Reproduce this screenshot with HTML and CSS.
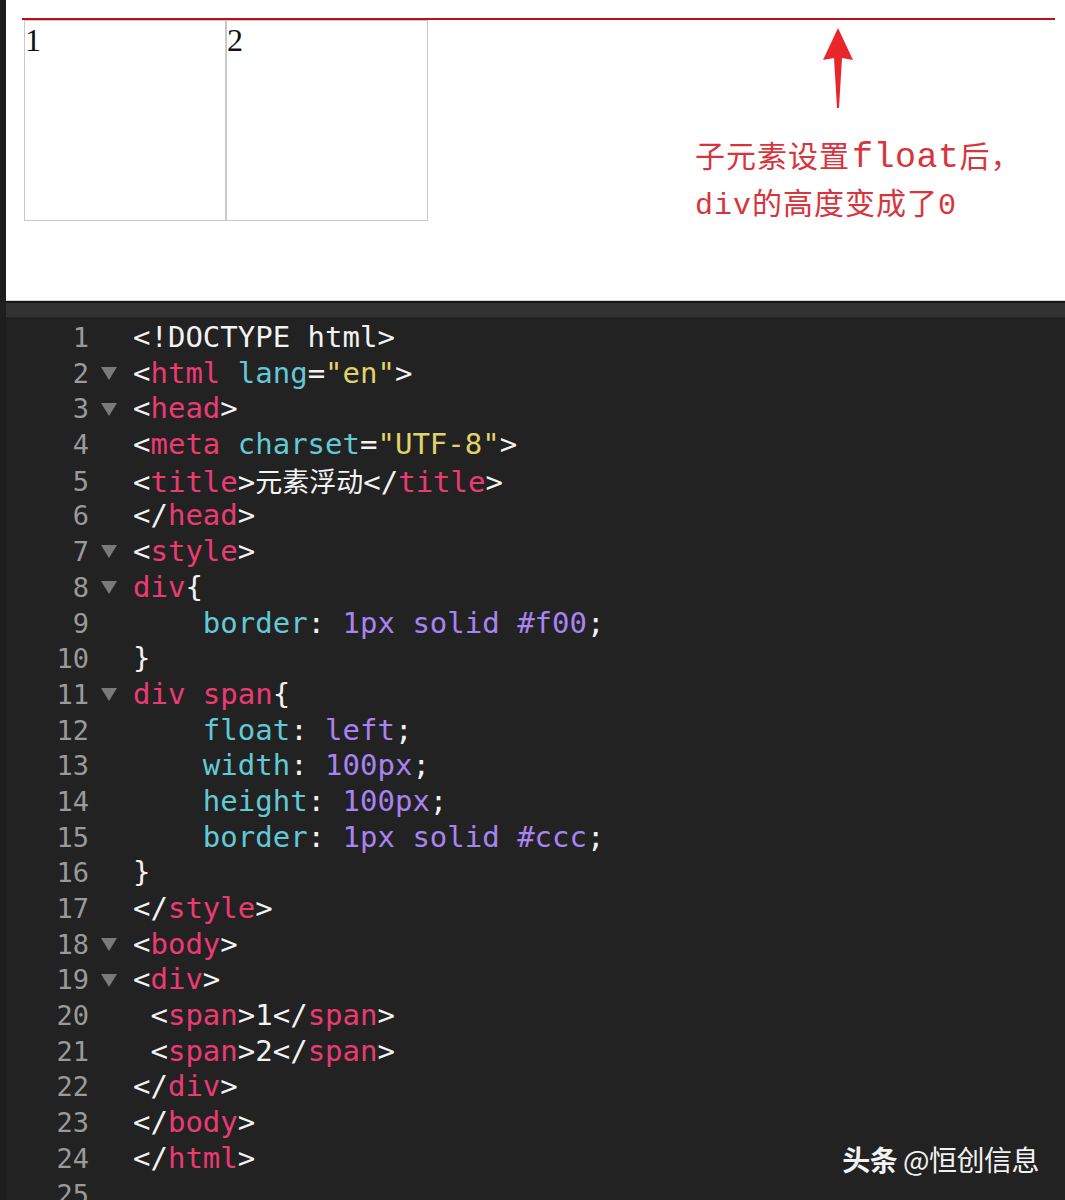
FILE: index.html
```html
<!DOCTYPE html>
<html lang="zh-CN">
<head>
<meta charset="UTF-8">
<title>元素浮动</title>
<link rel="stylesheet" href="styles.css">
</head>
<body>
<div class="preview">
  <div class="demo">
    <span class="box">1</span>
    <span class="box">2</span>
  </div>
  <svg class="arrow" width="40" height="82" viewBox="0 0 40 82">
    <path d="M20 0 L35 32 L24 30 L21 80 L19 80 L16 30 L5 32 Z" fill="#e8262c"/>
  </svg>
  <div class="note">
    <div class="note-line">子元素设置<span class="wide">float</span>后，</div>
    <div class="note-line">div的高度变成了0</div>
  </div>
</div>
<div class="divider"></div>
<div class="editor">
  <div class="row"><span class="ln">1</span><span class="fold"></span><span class="code"><span class="p">&lt;!DOCTYPE html&gt;</span></span></div>
  <div class="row"><span class="ln">2</span><span class="fold on"></span><span class="code"><span class="p">&lt;</span><span class="t">html</span> <span class="a">lang</span><span class="p">=</span><span class="s">"en"</span><span class="p">&gt;</span></span></div>
  <div class="row"><span class="ln">3</span><span class="fold on"></span><span class="code"><span class="p">&lt;</span><span class="t">head</span><span class="p">&gt;</span></span></div>
  <div class="row"><span class="ln">4</span><span class="fold"></span><span class="code"><span class="p">&lt;</span><span class="t">meta</span> <span class="a">charset</span><span class="p">=</span><span class="s">"UTF-8"</span><span class="p">&gt;</span></span></div>
  <div class="row"><span class="ln">5</span><span class="fold"></span><span class="code"><span class="p">&lt;</span><span class="t">title</span><span class="p">&gt;</span><span class="cjk">元素浮动</span><span class="p">&lt;/</span><span class="t">title</span><span class="p">&gt;</span></span></div>
  <div class="row"><span class="ln">6</span><span class="fold"></span><span class="code"><span class="p">&lt;/</span><span class="t">head</span><span class="p">&gt;</span></span></div>
  <div class="row"><span class="ln">7</span><span class="fold on"></span><span class="code"><span class="p">&lt;</span><span class="t">style</span><span class="p">&gt;</span></span></div>
  <div class="row"><span class="ln">8</span><span class="fold on"></span><span class="code"><span class="t">div</span><span class="p">{</span></span></div>
  <div class="row"><span class="ln">9</span><span class="fold"></span><span class="code">    <span class="a">border</span><span class="p">:</span> <span class="v">1px solid #f00</span><span class="p">;</span></span></div>
  <div class="row"><span class="ln">10</span><span class="fold"></span><span class="code"><span class="p">}</span></span></div>
  <div class="row"><span class="ln">11</span><span class="fold on"></span><span class="code"><span class="t">div span</span><span class="p">{</span></span></div>
  <div class="row"><span class="ln">12</span><span class="fold"></span><span class="code">    <span class="a">float</span><span class="p">:</span> <span class="v">left</span><span class="p">;</span></span></div>
  <div class="row"><span class="ln">13</span><span class="fold"></span><span class="code">    <span class="a">width</span><span class="p">:</span> <span class="v">100px</span><span class="p">;</span></span></div>
  <div class="row"><span class="ln">14</span><span class="fold"></span><span class="code">    <span class="a">height</span><span class="p">:</span> <span class="v">100px</span><span class="p">;</span></span></div>
  <div class="row"><span class="ln">15</span><span class="fold"></span><span class="code">    <span class="a">border</span><span class="p">:</span> <span class="v">1px solid #ccc</span><span class="p">;</span></span></div>
  <div class="row"><span class="ln">16</span><span class="fold"></span><span class="code"><span class="p">}</span></span></div>
  <div class="row"><span class="ln">17</span><span class="fold"></span><span class="code"><span class="p">&lt;/</span><span class="t">style</span><span class="p">&gt;</span></span></div>
  <div class="row"><span class="ln">18</span><span class="fold on"></span><span class="code"><span class="p">&lt;</span><span class="t">body</span><span class="p">&gt;</span></span></div>
  <div class="row"><span class="ln">19</span><span class="fold on"></span><span class="code"><span class="p">&lt;</span><span class="t">div</span><span class="p">&gt;</span></span></div>
  <div class="row"><span class="ln">20</span><span class="fold"></span><span class="code"> <span class="p">&lt;</span><span class="t">span</span><span class="p">&gt;1&lt;/</span><span class="t">span</span><span class="p">&gt;</span></span></div>
  <div class="row"><span class="ln">21</span><span class="fold"></span><span class="code"> <span class="p">&lt;</span><span class="t">span</span><span class="p">&gt;2&lt;/</span><span class="t">span</span><span class="p">&gt;</span></span></div>
  <div class="row"><span class="ln">22</span><span class="fold"></span><span class="code"><span class="p">&lt;/</span><span class="t">div</span><span class="p">&gt;</span></span></div>
  <div class="row"><span class="ln">23</span><span class="fold"></span><span class="code"><span class="p">&lt;/</span><span class="t">body</span><span class="p">&gt;</span></span></div>
  <div class="row"><span class="ln">24</span><span class="fold"></span><span class="code"><span class="p">&lt;/</span><span class="t">html</span><span class="p">&gt;</span></span></div>
  <div class="row"><span class="ln">25</span><span class="fold"></span><span class="code"></span></div>
  <div class="watermark"><b>头条</b> @恒创信息</div>
</div>
</body>
</html>
```
FILE: styles.css
```css
html, body {
  margin: 0;
  padding: 0;
}
body {
  background: #222222;
  width: 1065px;
  height: 1200px;
  overflow: hidden;
  border-left: 6px solid #1e1e1e;
  box-sizing: border-box;
}
.preview {
  position: relative;
  height: 301px;
  background: #ffffff;
  border-bottom: 1px solid #cfcfcf;
  box-sizing: border-box;
}
.demo {
  position: relative;
  top: 18px;
  margin-left: 16px;
  margin-right: 10px;
  border-top: 2px solid #b8121b;
}
.box {
  float: left;
  width: 200px;
  height: 199px;
  border: 1px solid #c9c9c9;
  font-family: "Liberation Serif", serif;
  font-size: 32px;
  line-height: 38px;
  color: #111;
}
.box:first-child {
  margin-left: 2px;
}
.arrow {
  position: absolute;
  left: 812px;
  top: 28px;
}
.note {
  position: absolute;
  left: 689px;
  top: 136px;
  color: #d8343c;
  font-family: "Liberation Mono", "Noto Sans CJK SC", monospace;
  font-size: 30px;
  line-height: 47px;
  letter-spacing: 1px;
}
.note .wide {
  font-size: 35px;
  letter-spacing: 0.5px;
  margin-left: 2px;
  line-height: 1;
}
.divider {
  height: 14px;
  background: #323232;
  border-top: 2px solid #161616;
}
.editor {
  position: relative;
  padding-top: 3px;
  font-family: "DejaVu Sans Mono", "Noto Sans CJK SC", monospace;
  font-size: 29px;
  color: #f2f2f2;
}
.row {
  display: grid;
  grid-template-columns: 83px 44px 1fr;
  height: 35.7px;
  line-height: 35.7px;
  align-items: center;
}
.ln {
  text-align: right;
  color: #9a9a9a;
  font-size: 27px;
}
.fold {
  display: flex;
  justify-content: center;
  align-items: center;
  height: 100%;
}
.fold.on::before {
  content: "";
  width: 0;
  height: 0;
  border-left: 8px solid transparent;
  border-right: 8px solid transparent;
  border-top: 13px solid #7a7a7a;
  margin-right: 4px;
}
.code {
  white-space: pre;
}
.p { color: #f2f2f2; }
.t { color: #ec3a72; }
.a { color: #62c9d6; }
.s { color: #e0d36c; }
.v { color: #a883f2; }
.cjk {
  font-family: "Noto Sans CJK SC", sans-serif;
  font-size: 27px;
  color: #f4f4f4;
}
.watermark {
  position: absolute;
  right: 26px;
  top: 822px;
  font-family: "Noto Sans CJK SC", sans-serif;
  font-size: 28px;
  color: #f2f2f2;
  letter-spacing: -0.5px;
}
.watermark b {
  font-weight: 700;
}
```
